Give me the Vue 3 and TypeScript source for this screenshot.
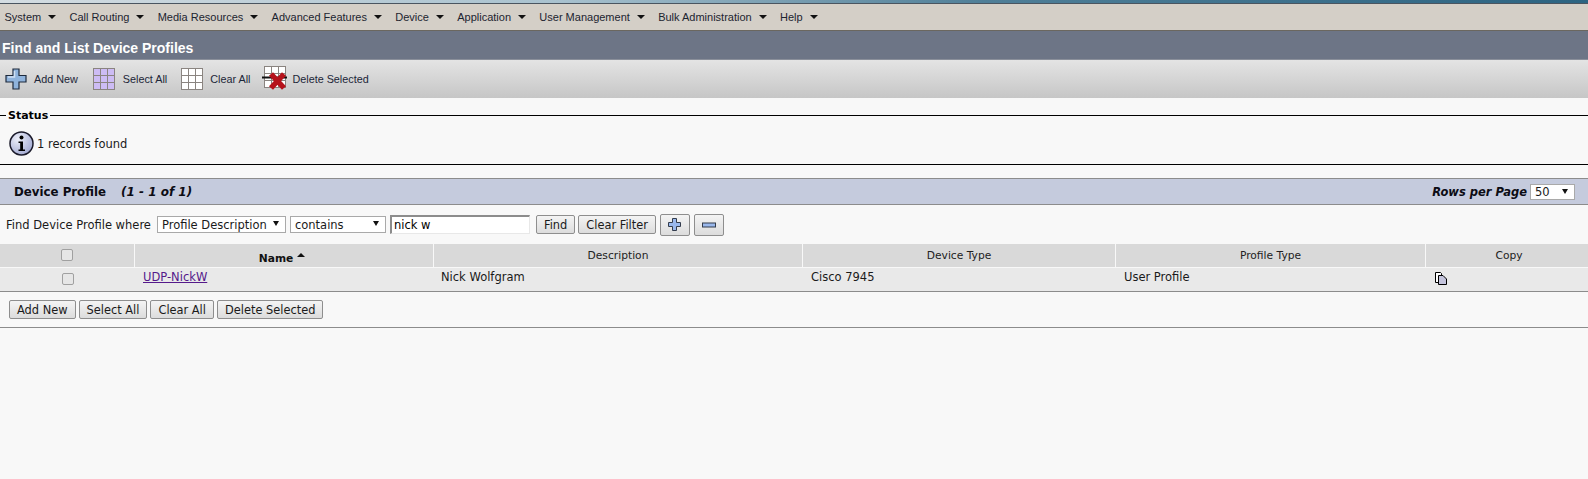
<script setup lang="ts">
const menus: string[] = ['System', 'Call Routing', 'Media Resources', 'Advanced Features', 'Device', 'Application', 'User Management', 'Bulk Administration', 'Help']
const columns: string[] = ['Description', 'Device Type', 'Profile Type', 'Copy']
const cells: string[] = ['Nick Wolfgram', 'Cisco 7945', 'User Profile']
const footerButtons: string[] = ['Add New', 'Select All', 'Clear All', 'Delete Selected']
</script>

<template>
  <div class="page">
    <div class="topstrip"></div>
    <nav class="menubar">
      <span v-for="m in menus" :key="m" class="menu">{{ m }}<i class="caret"></i></span>
    </nav>
    <h1 class="title">Find and List Device Profiles</h1>
    <div class="toolbar">
      <span class="tool t-add">
        <svg width="22" height="22" viewBox="0 0 22 22"><path d="M8 1h6v6.500h7v6.500h-7v7H8v-7H1V7.500h7z" fill="#8fb3dc" stroke="#1e2a3c" stroke-width="1.200"/><path d="M9.500 3v6H3" fill="none" stroke="#cfe0f2" stroke-width="1.500"/></svg>
        <span>Add New</span>
      </span>
      <span class="tool t-select">
        <svg width="22" height="22" viewBox="0 0 22 22"><rect x=".5" y=".5" width="21" height="21" fill="#cdbcf4" stroke="#8a8480"/><path d="M7.500 0v22M14.500 0v22M0 7.500h22M0 14.500h22" stroke="#8a8480"/></svg>
        <span>Select All</span>
      </span>
      <span class="tool t-clear">
        <svg width="22" height="22" viewBox="0 0 22 22"><rect x=".5" y=".5" width="21" height="21" fill="#fff" stroke="#8a8480"/><path d="M7.500 0v22M14.500 0v22M0 7.500h22M0 14.500h22" stroke="#8a8480"/></svg>
        <span>Clear All</span>
      </span>
      <span class="tool t-delete">
        <svg width="26" height="26" viewBox="0 0 26 26"><rect x="2.500" y=".5" width="21" height="21" fill="#fff" stroke="#8a8480"/><path d="M9.500 0v22M16.500 0v22M2 7.500h21M2 14.500h21" stroke="#8a8480"/><path d="M0 11.500h25" stroke="#111" stroke-width="2"/><path d="M9 8l13 14M22 8L9 22" stroke="#b5121b" stroke-width="5.500"/></svg>
        <span>Delete Selected</span>
      </span>
    </div>

    <section class="status">
      <div class="legend"><b>Status</b></div>
      <div class="status-body">
        <svg width="25" height="25" viewBox="0 0 25 25"><defs><radialGradient id="ig" cx=".35" cy=".3" r=".8"><stop offset="0" stop-color="#eef0fa"/><stop offset="1" stop-color="#9ea6d0"/></radialGradient></defs><circle cx="12.500" cy="12.500" r="11.500" fill="url(#ig)" stroke="#1a1a2a" stroke-width="1.500"/><circle cx="12.500" cy="6.500" r="2" fill="#000"/><path d="M9.500 10.500h4.500v8h2v1.500H9.500v-1.500h1.700v-6.500H9.500z" fill="#000"/></svg>
        <span>1 records found</span>
      </div>
    </section>

    <div class="band">
      <b class="band-title">Device Profile</b>
      <b class="band-range">(1 - 1 of 1)</b>
      <span class="rows">
        <b>Rows per Page</b>
        <span class="selwrap sel-rows"><select><option>50</option></select></span>
      </span>
    </div>

    <div class="filter">
      <span>Find Device Profile where</span>
      <span class="selwrap sel-field"><select><option>Profile Description</option></select></span>
      <span class="selwrap sel-op"><select><option>contains</option></select></span>
      <input class="search" type="text" value="nick w" />
      <button class="btn">Find</button>
      <button class="btn clear-filter">Clear Filter</button>
      <button class="btn icon-btn" aria-label="Add filter">
        <svg width="13" height="13" viewBox="0 0 13 13"><path d="M4.500.5h4v4h4v4h-4v4h-4v-4h-4v-4h4z" fill="#9ab8ec" stroke="#333c4c"/></svg>
      </button>
      <button class="btn icon-btn" aria-label="Remove filter">
        <svg width="14" height="6" viewBox="0 0 14 6"><rect x=".5" y="1" width="13" height="4" fill="#9ab8ec" stroke="#333c4c"/></svg>
      </button>
    </div>

    <div class="grid head">
      <div class="h"><input class="check" type="checkbox" /></div>
      <div class="h name-head"><b>Name</b><i class="sort"></i></div>
      <div v-for="c in columns" :key="c" class="h">{{ c }}</div>
    </div>
    <div class="grid row">
      <div class="c center"><input class="check" type="checkbox" /></div>
      <div class="c"><a href="#">UDP-NickW</a></div>
      <div v-for="c in cells" :key="c" class="c">{{ c }}</div>
      <div class="c">
        <svg class="copy" width="12" height="13" viewBox="0 0 12 13"><path d="M.5.500h5l1 1v9h-6z" fill="#fff" stroke="#000"/><path d="M3.500 3.500h4.500l3.500 3.500v5.500h-8z" fill="#c4c4dc" stroke="#000"/></svg>
      </div>
    </div>

    <div class="actions">
      <button v-for="b in footerButtons" :key="b" class="btn">{{ b }}</button>
    </div>
  </div>
</template>

<style scoped>
.page {
  height: 479px;
  overflow: hidden;
  background: #f8f8f8;
  font-family: "DejaVu Sans", sans-serif;
  font-size: 11.500px;
  color: #1a1a1a;
}
.topstrip {
  height: 3px;
  background: linear-gradient(90deg, #d4dde2 0%, #a9c2cf 35%, #4f7f98 62%, #2c6482 100%);
  border-bottom: 1px solid #4a5560;
}
.menubar {
  height: 27px;
  box-sizing: border-box;
  display: flex;
  align-items: center;
  padding-left: 4.500px;
  background: #d4cfc7;
  border-bottom: 1px solid #6b675f;
  font-family: "Liberation Sans", sans-serif;
  font-size: 11px;
  color: #1c2430;
}
.menu {
  display: inline-flex;
  align-items: center;
  margin-right: 13.300px;
}
.caret {
  width: 0;
  height: 0;
  margin-left: 7px;
  border-left: 4px solid transparent;
  border-right: 4px solid transparent;
  border-top: 4px solid #111;
}
.title {
  margin: 0;
  height: 29px;
  box-sizing: border-box;
  padding: 9px 0 0 2px;
  background: #6d7586;
  border-bottom: 1px solid #8a8f9a;
  color: #fff;
  font-family: "Liberation Sans", sans-serif;
  font-size: 14px;
  line-height: 16px;
  font-weight: 700;
}
.toolbar {
  height: 38px;
  box-sizing: border-box;
  display: flex;
  align-items: center;
  background: linear-gradient(#e4e4e4, #c6c6c6);
  font-family: "Liberation Sans", sans-serif;
  font-size: 10.800px;
  color: #1c2638;
}
.tool {
  display: inline-flex;
  align-items: center;
}
.tool svg { flex: none; }
.t-add { margin-left: 5px; gap: 7px; }
.t-select { margin-left: 15px; gap: 8px; }
.t-clear { margin-left: 14px; gap: 7px; }
.t-delete { margin-left: 12px; gap: 4px; }
.status {
  height: 67px;
  box-sizing: border-box;
  padding-top: 8px;
  border-bottom: 1px solid #000;
}
.legend {
  display: flex;
  align-items: center;
  gap: 2px;
  height: 18px;
  font-size: 11px;
  color: #000;
}
.legend::before {
  content: "";
  width: 6px;
  border-top: 1px solid #000;
}
.legend::after {
  content: "";
  flex: 1;
  border-top: 1px solid #000;
}
.status-body {
  display: flex;
  align-items: center;
  gap: 3px;
  padding-left: 9px;
  height: 25px;
  margin-top: 7px;
}
.band {
  margin-top: 13px;
  height: 27px;
  box-sizing: border-box;
  display: flex;
  align-items: center;
  padding: 0 13px 0 14px;
  background: #c5cbdd;
  border-top: 1px solid #8c8c8c;
  border-bottom: 1px solid #8c8c8c;
  color: #0c0c14;
}
.band-title { font-size: 11.800px; }
.band-range {
  margin-left: 15px;
  font-size: 12px;
  font-style: italic;
}
.rows {
  margin-left: auto;
  display: flex;
  align-items: center;
  gap: 3px;
  font-style: italic;
}
.selwrap {
  position: relative;
  display: inline-block;
}
.selwrap::after {
  content: "";
  position: absolute;
  right: 7px;
  top: 5px;
  border-left: 3px solid transparent;
  border-right: 3px solid transparent;
  border-top: 5px solid #111;
  pointer-events: none;
}
.selwrap select {
  display: block;
  appearance: none;
  height: 16px;
  box-sizing: border-box;
  padding: 0 0 0 4px;
  background: #fff;
  border: 1px solid #a9a9a9;
  border-radius: 0;
  font: inherit;
  font-style: normal;
  font-weight: 400;
  color: #1a1a1a;
  width: 100%;
}
.sel-rows { width: 45px; }
.sel-field { width: 129px; margin-left: 2px; }
.sel-op { width: 96px; }
.sel-field select, .sel-op select { height: 17px; }
.filter {
  height: 39px;
  box-sizing: border-box;
  display: flex;
  align-items: center;
  gap: 4px;
  padding-left: 6px;
}
.search {
  width: 140px;
  height: 19px;
  box-sizing: border-box;
  padding: 0 2px;
  margin-right: 2px;
  border: 1px solid #e8e8e8;
  border-top: 2px solid #8c8c8c;
  border-left: 2px solid #8c8c8c;
  background: #fff;
  font: inherit;
  outline: none;
}
.btn {
  height: 19px;
  box-sizing: border-box;
  padding: 0 7px;
  border: 1px solid #8e8e8e;
  border-radius: 2px;
  background: linear-gradient(#f4f4f4, #dcdcdc);
  font: inherit;
  font-size: 11.400px;
  color: #1a1a1a;
}
.clear-filter { margin-left: -1px; }
.icon-btn {
  width: 30px;
  height: 22px;
  padding: 0;
  display: inline-flex;
  align-items: center;
  justify-content: center;
}
.grid {
  display: grid;
  grid-template-columns: 134px 299px 369px 313px 310px 1fr;
}
.head {
  height: 23px;
  background: #d9d9d9;
  font-size: 10.700px;
  color: #222;
}
.h {
  display: flex;
  align-items: center;
  justify-content: center;
  border-left: 1px solid #f8f8f8;
}
.h:first-child { border-left: 0; padding-bottom: 1px; }
.h:last-child { padding-left: 4px; }
.name-head { padding: 5px 4px 0 0; box-sizing: border-box; }
.name-head b { color: #111; }
.sort {
  margin: -7px 0 0 4px;
  border-left: 4px solid transparent;
  border-right: 4px solid transparent;
  border-bottom: 4px solid #111;
}
.row {
  height: 25px;
  background: #e9e9e9;
  border-top: 1px solid #f8f8f8;
  border-bottom: 1px solid #8c8c8c;
  box-sizing: border-box;
}
.c {
  padding: 2px 0 0 9px;
  line-height: 15px;
  display: flex;
  align-items: flex-start;
}
.c:nth-child(3) { padding-left: 8px; }
.center { justify-content: center; padding: 5px 0 0 1px; }
.c a { color: #551a8b; text-decoration: underline; }
.copy { margin: 2px 0 0 1px; }
.check {
  appearance: none;
  display: block;
  width: 12px;
  height: 12px;
  margin: 0;
  background: #e6e6e6;
  border: 1px solid #a0a0a0;
  border-radius: 2px;
}
.actions {
  height: 36px;
  box-sizing: border-box;
  display: flex;
  align-items: flex-start;
  gap: 3px;
  padding: 8px 0 0 9px;
  border-bottom: 1px solid #8c8c8c;
}
</style>
